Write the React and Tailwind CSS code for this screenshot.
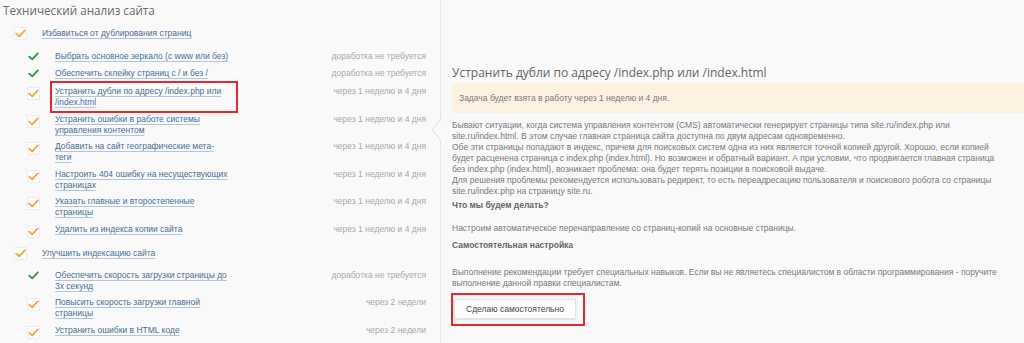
import React from 'react'

const groups = [
  {
    title: 'Избавиться от дублирования страниц',
    items: [
      { text: 'Выбрать основное зеркало (с www или без)', done: true, status: 'доработка не требуется' },
      { text: 'Обеспечить склейку страниц с / и без /', done: true, status: 'доработка не требуется' },
      { text: 'Устранить дубли по адресу /index.php или\n/index.html', status: 'через 1 неделю и 4 дня', active: true },
      { text: 'Устранить ошибки в работе системы\nуправления контентом', status: 'через 1 неделю и 4 дня' },
      { text: 'Добавить на сайт географические мета-\nтеги', status: 'через 1 неделю и 4 дня' },
      { text: 'Настроить 404 ошибку на несуществующих\nстраницах', status: 'через 1 неделю и 4 дня' },
      { text: 'Указать главные и второстепенные\nстраницы', status: 'через 1 неделю и 4 дня' },
      { text: 'Удалить из индекса копии сайта', status: 'через 1 неделю и 4 дня' },
    ],
  },
  {
    title: 'Улучшить индексацию сайта',
    items: [
      { text: 'Обеспечить скорость загрузки страницы до\n3х секунд', done: true, status: 'доработка не требуется' },
      { text: 'Повысить скорость загрузки главной\nстраницы', status: 'через 2 недели' },
      { text: 'Устранить ошибки в HTML коде', status: 'через 2 недели' },
    ],
  },
]

const Tick = ({ color }) => (
  <svg width="11" height="9" viewBox="0 0 11 9">
    <path d="M1.2 4.6 L4.2 7.4 L9.8 1.4" stroke={color} strokeWidth="1.8" fill="none" strokeLinecap="round" strokeLinejoin="round" />
  </svg>
)

const Box = () => (
  <div className="w-[13px] h-[13px] shrink-0 bg-white border border-[#ececec] flex items-center justify-center">
    <Tick color="#f7a233" />
  </div>
)

const linkCls = 'text-[#46709a] underline decoration-[#b7c6d6] underline-offset-2'

export default function App() {
  return (
    <div className="w-[1024px] h-[343px] overflow-hidden bg-[#f9f9f9] flex text-[8.5px] leading-[11px] font-['Liberation_Sans',sans-serif]">
      {/* Левая колонка */}
      <div className="w-[441px] shrink-0 border-r border-[#e6e6e6] relative pl-[3px] pr-[14px]">
        <h1 className="text-[11.7px] leading-[18px] text-[#6a6a6a] mt-[1px] font-['Open_Sans',sans-serif]">Технический анализ сайта</h1>
        <div className="flex flex-col">
          {groups.map((g, gi) => (
            <div key={gi} className={gi ? 'mt-[9px]' : 'mt-[8px]'}>
              <div className="flex items-center gap-[15px] pl-[11px]">
                <Box />
                <span className={linkCls}>{g.title}</span>
              </div>
              <div className={`flex flex-col gap-[5.5px] ${gi ? 'mt-[10px]' : 'mt-[11px]'}`}>
                {g.items.map((it, i) => (
                  <div key={i} className={`flex items-start ${it.active ? 'mt-[2px]' : ''}`}>
                    <div className="w-[13px] ml-[24px] mr-[15px] shrink-0 flex justify-center pt-[1px]">
                      {it.done ? <Tick color="#2a9a46" /> : <Box />}
                    </div>
                    <div className={`w-[178px] whitespace-pre-line ${it.active ? 'outline-2 outline-[#e8262c] outline-offset-[3px]' : ''}`}>
                      <span className={linkCls}>{it.text}</span>
                    </div>
                    <div className="flex-1 text-right text-[#a9a9a9]">{it.status}</div>
                  </div>
                ))}
              </div>
            </div>
          ))}
        </div>
        {/* стрелка к панели */}
        <svg className="absolute right-[-1px] top-[119px]" width="9" height="22" viewBox="0 0 9 22">
          <path d="M9 0 L0.5 11 L9 22" fill="#f9f9f9" stroke="#dcdcdc" strokeWidth="1" />
        </svg>
      </div>

      {/* Правая колонка */}
      <div className="flex-1 pl-[11px] pt-[64px] text-[#7a7a7a]">
        <h2 className="text-[12px] leading-[17px] text-[#666] font-['Open_Sans',sans-serif]">Устранить дубли по адресу /index.php или /index.html</h2>
        <div className="bg-[#fdf1e2] mt-[2px] h-[30px] flex items-center px-[7px]">
          Задача будет взята в работу через 1 неделю и 4 дня.
        </div>
        <p className="mt-[7px] pr-[6px]">
          Бывают ситуации, когда система управления контентом (CMS) автоматически генерирует страницы типа site.ru/index.php или
          <br />
          site.ru/index.html. В этом случае главная страница сайта доступна по двум адресам одновременно.
          <br />
          Обе эти страницы попадают в индекс, причем для поисковых систем одна из них является точной копией другой. Хорошо, если копией
          <br />
          будет расценена страница с index.php (index.html). Но возможен и обратный вариант. А при условии, что продвигается главная страница
          <br />
          без index.php (index.html), возникает проблема: она будет терять позиции в поисковой выдаче.
          <br />
          Для решения проблемы рекомендуется использовать редирект, то есть переадресацию пользователя и поискового робота со страницы
          <br />
          site.ru/index.php на страницу site.ru.
        </p>
        <p className="mt-[3px] font-bold text-[#666]">Что мы будем делать?</p>
        <p className="mt-[12px]">Настроим автоматическое перенаправление со страниц-копий на основные страницы.</p>
        <p className="mt-[6px] font-bold text-[#666]">Самостоятельная настройка</p>
        <p className="mt-[16px] pr-[6px]">
          Выполнение рекомендации требует специальных навыков. Если вы не являетесь специалистом в области программирования - поручите
          <br />
          выполнение данной правки специалистам.
        </p>
        <div className="mt-[4px] ml-[-1px] w-[134px] h-[33px] border-2 border-[#e8262c] pt-[4px] pl-[1px]">
          <button className="w-[122px] h-[20px] bg-white border border-[#e2e2e2] text-[#444] shadow-sm">
            Сделаю самостоятельно
          </button>
        </div>
      </div>
    </div>
  )
}
